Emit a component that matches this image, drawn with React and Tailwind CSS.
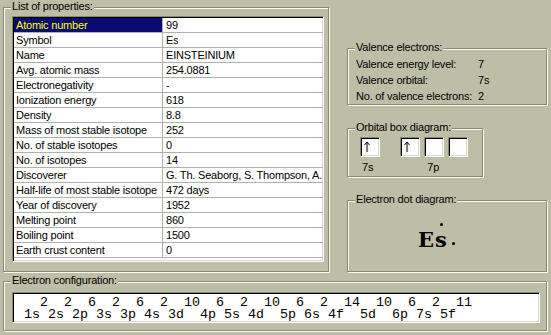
import React from "react";

const rows = [
  ["Atomic number", "99"],
  ["Symbol", "Es"],
  ["Name", "EINSTEINIUM"],
  ["Avg. atomic mass", "254.0881"],
  ["Electronegativity", "-"],
  ["Ionization energy", "618"],
  ["Density", "8.8"],
  ["Mass of most stable isotope", "252"],
  ["No. of stable isotopes", "0"],
  ["No. of isotopes", "14"],
  ["Discoverer", "G. Th. Seaborg, S. Thompson, A. Ghiorso"],
  ["Half-life of most stable isotope", "472 days"],
  ["Year of discovery", "1952"],
  ["Melting point", "860"],
  ["Boiling point", "1500"],
  ["Earth crust content", "0"],
];

function Group({ label, className = "", children }) {
  return (
    <div
      className={`relative border border-[#8a8a6e] shadow-[inset_1px_1px_0_#fbfbf3,1px_1px_0_#fbfbf3] ${className}`}
    >
      <span className="absolute top-[-8px] left-[7px] bg-[#bebea6] px-[1px] leading-[13px] whitespace-nowrap">
        {label}
      </span>
      {children}
    </div>
  );
}

const sunken =
  "border border-t-[#8a8a6e] border-l-[#8a8a6e] border-b-white border-r-white shadow-[inset_1px_1px_0_#000,inset_-1px_-1px_0_#d8d8d0] bg-white";

function Arrow() {
  return (
    <svg width="6" height="11" viewBox="0 0 6 11" className="block">
      <path d="M3 1.5 V11" stroke="#000" strokeWidth="1" />
      <path d="M0.5 4 L3 1 L5.5 4" stroke="#000" strokeWidth="1" fill="none" />
    </svg>
  );
}

function OBox({ filled }) {
  return (
    <div className={`w-[20px] h-[20px] ${sunken} pl-[3px] pt-[3px]`}>
      {filled ? <Arrow /> : null}
    </div>
  );
}

export default function App() {
  const top = "   2  2  6  2  6  2  10  6  2  10  6  2  14  10  6  2  11";
  const bottom = " 1s 2s 2p 3s 3p 4s 3d  4p 5s 4d  5p 6s 4f  5d  6p 7s 5f";
  return (
    <div className="w-[551px] h-[335px] overflow-hidden bg-[#bebea6] pt-[7px] pl-[3px] text-black text-[11px] tracking-[-0.2px] font-['Liberation_Sans',Arial,sans-serif]">
      <div className="flex items-start">
        <Group label="List of properties:" className="w-[326px] h-[265px] shrink-0">
          <div className={`ml-[8px] mt-[8px] w-[312px] h-[246px] ${sunken} pt-[1px] pl-[1px] overflow-hidden`}>
            {rows.map(([k, v], i) => (
              <div key={k} className="flex h-[15px] border-b border-[#b0b0b0]">
                <div
                  className={`w-[149px] shrink-0 border-r border-[#b0b0b0] pl-[2px] leading-[14px] whitespace-nowrap overflow-hidden ${
                    i === 0 ? "bg-[#0a0a70] text-[#ffff00]" : ""
                  }`}
                >
                  {k}
                </div>
                <div className="pl-[3px] leading-[14px] whitespace-nowrap overflow-hidden">{v}</div>
              </div>
            ))}
          </div>
        </Group>

        <div className="ml-[18px] flex flex-col">
          <Group label="Valence electrons:" className="mt-[41px] w-[200px] h-[57px]">
            <div className="pt-[7px] pl-[8px] leading-[16px]">
              <div className="flex">
                <span className="w-[122px]">Valence energy level:</span>
                <span>7</span>
              </div>
              <div className="flex">
                <span className="w-[122px]">Valence orbital:</span>
                <span>7s</span>
              </div>
              <div className="flex">
                <span className="w-[122px]">No. of valence electrons:</span>
                <span>2</span>
              </div>
            </div>
          </Group>

          <Group label="Orbital box diagram:" className="mt-[23px] w-[136px] h-[49px]">
            <div className="mt-[8px] ml-[12px] flex">
              <OBox filled />
              <div className="ml-[20px] flex gap-[4px]">
                <OBox filled />
                <OBox />
                <OBox />
              </div>
            </div>
            <div className="flex leading-[13px] mt-[4px]">
              <span className="ml-[14px]">7s</span>
              <span className="ml-[54px]">7p</span>
            </div>
          </Group>

          <Group label="Electron dot diagram:" className="mt-[23px] w-[200px] h-[72px]">
            <div className="mt-[26px] ml-[70px] relative inline-block">
              <span className="block text-[21px] leading-[26px] font-bold tracking-[1px] font-['DejaVu_Serif','Liberation_Serif',serif]">
                Es
              </span>
              <span className="absolute left-[22px] top-[-4px] w-[3px] h-[3px] rounded-full bg-black" />
              <span className="absolute left-[34px] top-[15px] w-[3px] h-[3px] rounded-full bg-black" />
            </div>
          </Group>
        </div>
      </div>

      <Group label="Electron configuration:" className="mt-[9px] w-[544px] h-[50px]">
        <div className={`ml-[8px] mt-[10px] w-[528px] h-[31px] ${sunken} pt-[4px] pl-[3px]`}>
          <div className="whitespace-pre text-[13.33px] leading-[12px] tracking-normal font-['Liberation_Mono','Courier_New',monospace]">
            {top}
            {"\n"}
            {bottom}
          </div>
        </div>
      </Group>
    </div>
  );
}
